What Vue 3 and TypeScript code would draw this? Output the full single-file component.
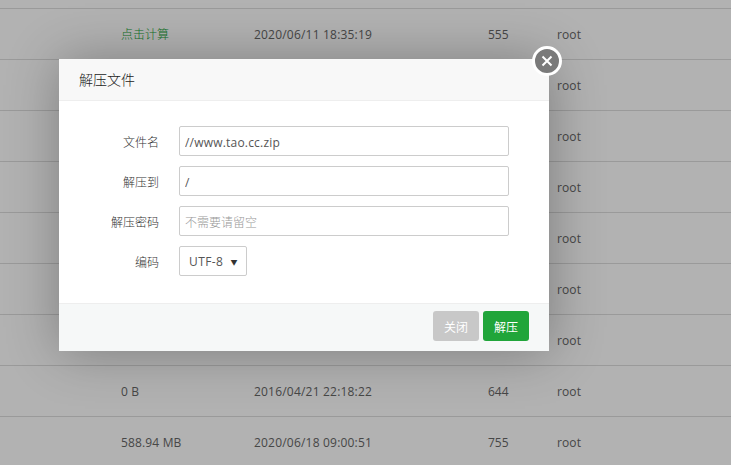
<script setup lang="ts">
interface FileRow {
  size?: string;
  time?: string;
  perm?: string;
  link?: boolean;
}

const rows: FileRow[] = [
  { size: '点击计算', time: '2020/06/11 18:35:19', perm: '555', link: true },
  {},
  {},
  {},
  {},
  {},
  {},
  { size: '0 B', time: '2016/04/21 22:18:22', perm: '644' },
  { size: '588.94 MB', time: '2020/06/18 09:00:51', perm: '755' },
];
</script>

<template>
  <div class="page">
    <div class="table">
      <div v-for="(row, i) in rows" :key="i" class="row">
        <span class="size" :class="{ link: row.link }">{{ row.size }}</span>
        <span class="time">{{ row.time }}</span>
        <span class="perm">{{ row.perm }}</span>
        <span class="owner">root</span>
      </div>
    </div>

    <div class="shade"></div>

    <div class="layer">
      <div class="layer-title">解压文件</div>
      <div class="layer-body">
        <div class="line">
          <span class="tname">文件名</span>
          <input class="bt-input" value="//www.tao.cc.zip" />
        </div>
        <div class="line">
          <span class="tname">解压到</span>
          <input class="bt-input" value="/" />
        </div>
        <div class="line">
          <span class="tname">解压密码</span>
          <input class="bt-input" placeholder="不需要请留空" />
        </div>
        <div class="line">
          <span class="tname">编码</span>
          <div class="select">UTF-8<span class="arrow">▼</span></div>
        </div>
      </div>
      <div class="layer-foot">
        <button class="btn btn-close">关闭</button>
        <button class="btn btn-ok">解压</button>
      </div>
      <button class="close-x">
        <svg width="12" height="12" viewBox="0 0 12 12">
          <path d="M1.5 1.5l9 9M10.5 1.5l-9 9" stroke="#fff" stroke-width="2" fill="none" />
        </svg>
      </button>
    </div>
  </div>
</template>

<style scoped>
.page {
  position: relative;
  width: 731px;
  height: 465px;
  overflow: hidden;
  background: #fff;
  font-family: "Open Sans", "Noto Sans CJK SC", sans-serif;
  font-size: 12px;
  color: #666;
}

.table {
  padding-top: 8px;
}

.row {
  display: flex;
  align-items: center;
  height: 50px;
  padding-left: 121px;
  border-top: 1px solid #ddd;
}

.size {
  width: 133px;
  letter-spacing: 0.15px;
}

.link {
  color: #20a53a;
  letter-spacing: 0;
  font-weight: 300;
}

.time {
  width: 234px;
  letter-spacing: 0.2px;
}

.perm {
  width: 69px;
}

.owner {
  letter-spacing: 0.1px;
}

.shade {
  position: absolute;
  inset: 0;
  background: rgba(0, 0, 0, 0.3);
}

.layer {
  position: absolute;
  left: 59px;
  top: 59px;
  width: 490px;
  height: 292px;
  display: flex;
  flex-direction: column;
  background: #fff;
  box-shadow: 1px 1px 50px rgba(0, 0, 0, 0.3);
}

.layer-title {
  height: 41px;
  line-height: 41px;
  padding-left: 20px;
  font-size: 14px;
  font-weight: 300;
  color: #222;
  background: #f8f8f8;
  border-bottom: 1px solid #eee;
}

.layer-body {
  flex: 1;
  display: flex;
  flex-direction: column;
  gap: 10px;
  padding-top: 25px;
}

.line {
  display: flex;
  align-items: center;
  height: 30px;
}

.tname {
  width: 100px;
  margin-right: 20px;
  padding-top: 2px;
  text-align: right;
  font-weight: 300;
  color: #333;
}

.bt-input {
  box-sizing: border-box;
  width: 330px;
  height: 30px;
  padding: 2px 5px 0;
  border: 1px solid #ccc;
  outline: none;
  border-radius: 2px;
  font: inherit;
  font-size: 12px;
  letter-spacing: 0.2px;
  color: #555;
}

.bt-input::placeholder {
  color: #999;
  opacity: 1;
  letter-spacing: 0;
  font-weight: 300;
}

.select {
  box-sizing: border-box;
  display: flex;
  align-items: center;
  justify-content: space-between;
  width: 68px;
  height: 30px;
  padding: 1px 8px 0 9px;
  border: 1px solid #ccc;
  border-radius: 2px;
  letter-spacing: 0.4px;
  color: #555;
}

.arrow {
  font-size: 7px;
  color: #333;
}

.layer-foot {
  display: flex;
  justify-content: flex-end;
  gap: 4px;
  height: 48px;
  box-sizing: border-box;
  padding: 7px 20px 0 0;
  background: #f6f8f8;
  border-top: 1px solid #eee;
}

.btn {
  width: 46px;
  height: 30px;
  padding: 1px 0 0;
  border: none;
  border-radius: 3px;
  font: inherit;
  font-size: 12px;
  color: #fff;
}

.btn-close {
  background: #c8c8c8;
}

.btn-ok {
  background: #20a53a;
}

.close-x {
  position: absolute;
  right: -13px;
  top: -13px;
  box-sizing: border-box;
  width: 30px;
  height: 30px;
  padding: 0;
  display: flex;
  align-items: center;
  justify-content: center;
  border: 3px solid #fff;
  border-radius: 50%;
  background: #7a7a7a;
}
</style>
